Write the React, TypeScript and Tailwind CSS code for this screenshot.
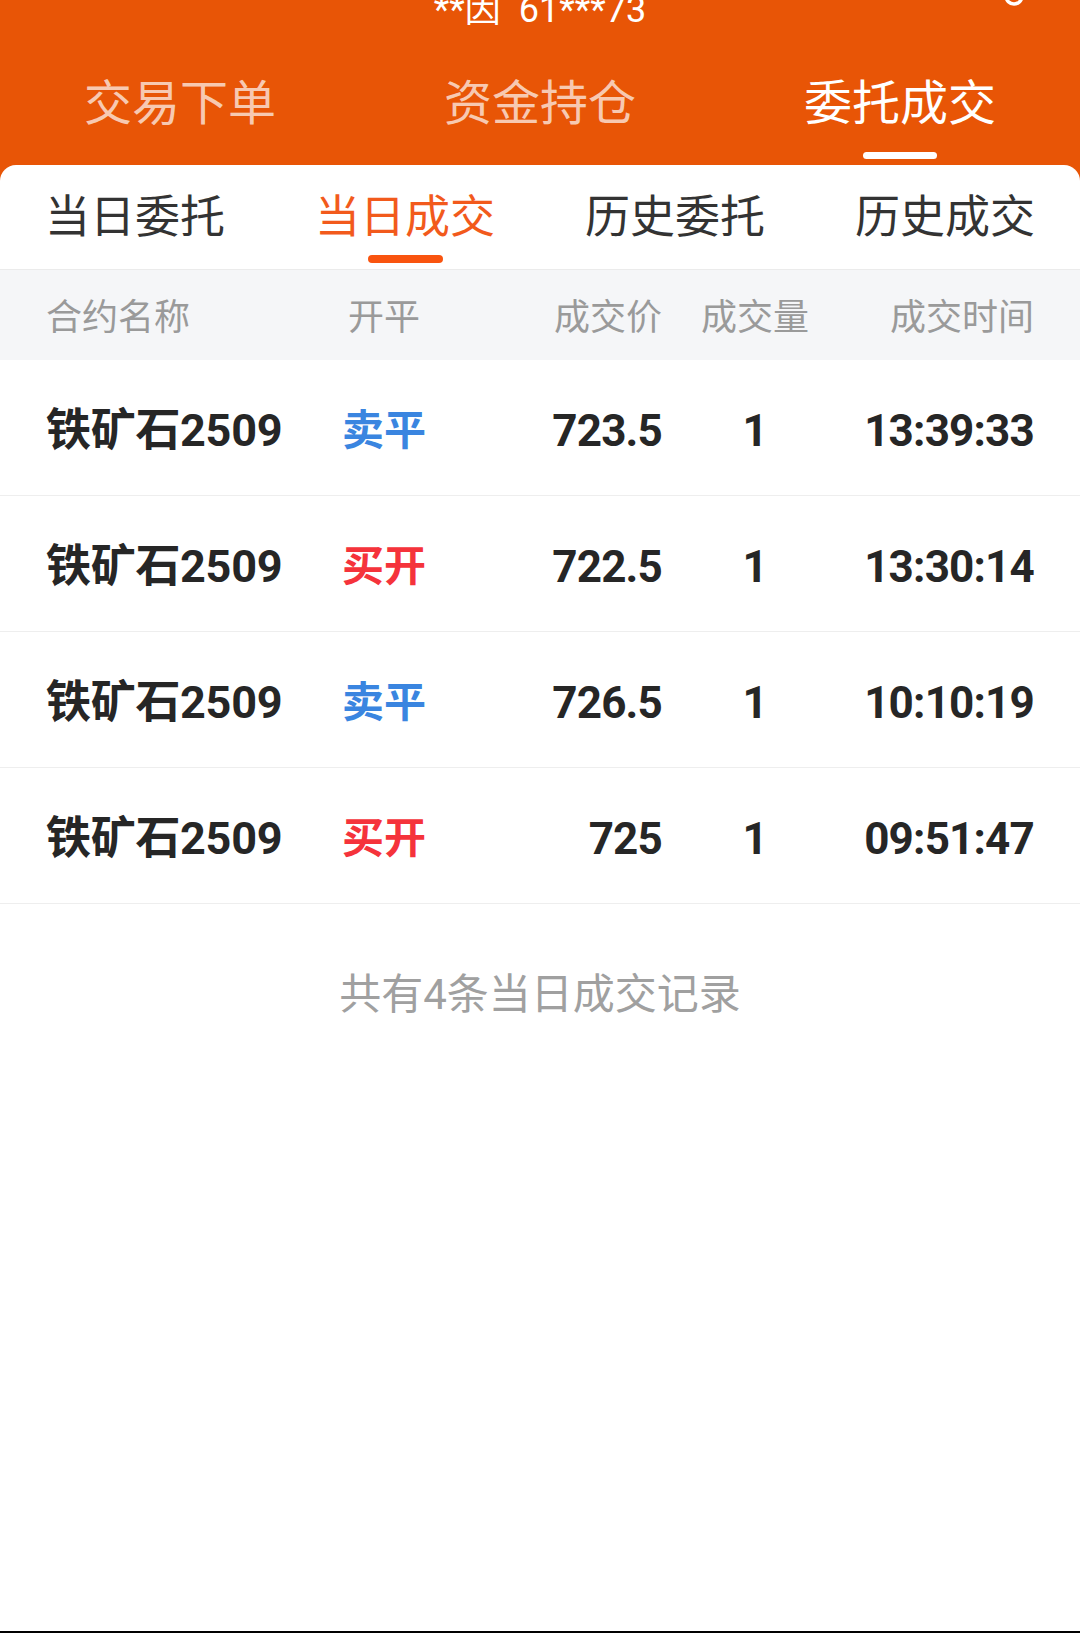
import React from "react";

const FONT = { fontFamily: 'Roboto, "Noto Sans CJK SC", sans-serif' };

const MAIN_TABS = ["交易下单", "资金持仓", "委托成交"];
const SUB_TABS = ["当日委托", "当日成交", "历史委托", "历史成交"];

interface Trade {
  name: string;
  side: "sell_close" | "buy_open";
  price: string;
  qty: number;
  time: string;
}

const TRADES: Trade[] = [
  { name: "铁矿石2509", side: "sell_close", price: "723.5", qty: 1, time: "13:39:33" },
  { name: "铁矿石2509", side: "buy_open", price: "722.5", qty: 1, time: "13:30:14" },
  { name: "铁矿石2509", side: "sell_close", price: "726.5", qty: 1, time: "10:10:19" },
  { name: "铁矿石2509", side: "buy_open", price: "725", qty: 1, time: "09:51:47" },
];

const COLS = "grid grid-cols-[268px_140px_208px_186px_186px] px-[46px] items-center";

export default function App() {
  const activeMain = 2;
  const activeSub = 1;

  return (
    <div
      className="relative w-[1080px] h-[1633px] flex flex-col bg-[#e85506] overflow-hidden"
      style={FONT}
    >
      {/* status/title strip, cut off at the top */}
      <div className="h-[60px] flex justify-center">
        <div className="-mt-[8px] text-[36px] leading-none text-white whitespace-pre">
          **因  61***73
        </div>
      </div>
      <svg
        className="absolute top-0 left-[1002px]"
        width="24"
        height="8"
        viewBox="0 0 24 8"
      >
        <circle cx="12" cy="-4" r="8" fill="none" stroke="#fff" strokeWidth="3.5" />
      </svg>

      {/* main tabs */}
      <div className="grid grid-cols-3 h-[105px]">
        {MAIN_TABS.map((t, i) => (
          <div key={t} className="flex flex-col items-center pt-[20px]">
            <span
              className={`text-[48px] leading-none ${
                i === activeMain ? "text-white" : "text-white/70"
              }`}
            >
              {t}
            </span>
            <span
              className={`mt-[24px] h-[7px] w-[74px] rounded-full ${
                i === activeMain ? "bg-white" : "bg-transparent"
              }`}
            />
          </div>
        ))}
      </div>

      {/* card */}
      <div className="flex-1 flex flex-col bg-white rounded-t-[16px]">
        <div className="grid grid-cols-4 h-[105px] border-b border-[#ebebeb]">
          {SUB_TABS.map((t, i) => (
            <div key={t} className="flex flex-col items-center pt-[30px]">
              <span
                className={`text-[45px] leading-none ${
                  i === activeSub ? "text-[#f25a1c]" : "text-[#333333]"
                }`}
              >
                {t}
              </span>
              <span
                className={`mt-[15px] h-[8px] w-[75px] rounded-full ${
                  i === activeSub ? "bg-[#f9540f]" : "bg-transparent"
                }`}
              />
            </div>
          ))}
        </div>

        {/* table header */}
        <div className={`${COLS} h-[90px] pt-[6px] bg-[#f5f6f8] text-[36px] leading-none text-[#9a9a9a]`}>
          <span>合约名称</span>
          <span className="text-center">开平</span>
          <span className="text-right">成交价</span>
          <span className="text-center">成交量</span>
          <span className="text-right">成交时间</span>
        </div>

        {TRADES.map((r, i) => (
          <div
            key={i}
            className={`${COLS} h-[136px] pt-[6px] border-b border-[#eeeeee] font-bold text-[#262626] leading-none`}
          >
            <span className="text-[45px] tracking-[-0.3px]">{r.name}</span>
            <span
              className={`text-center text-[42px] ${
                r.side === "sell_close" ? "text-[#3a85e0]" : "text-[#f5333b]"
              }`}
            >
              {r.side === "sell_close" ? "卖平" : "买开"}
            </span>
            <span className="text-right text-[44px] tracking-[-0.8px]">{r.price}</span>
            <span className="text-center text-[44px]">{r.qty}</span>
            <span className="text-right text-[44px] tracking-[-0.8px]">{r.time}</span>
          </div>
        ))}

        <div className="mt-[70px] text-center text-[42px] leading-none text-[#a0a0a0]">
          共有4条当日成交记录
        </div>
      </div>
      <div className="h-[2px] bg-black" />
    </div>
  );
}
